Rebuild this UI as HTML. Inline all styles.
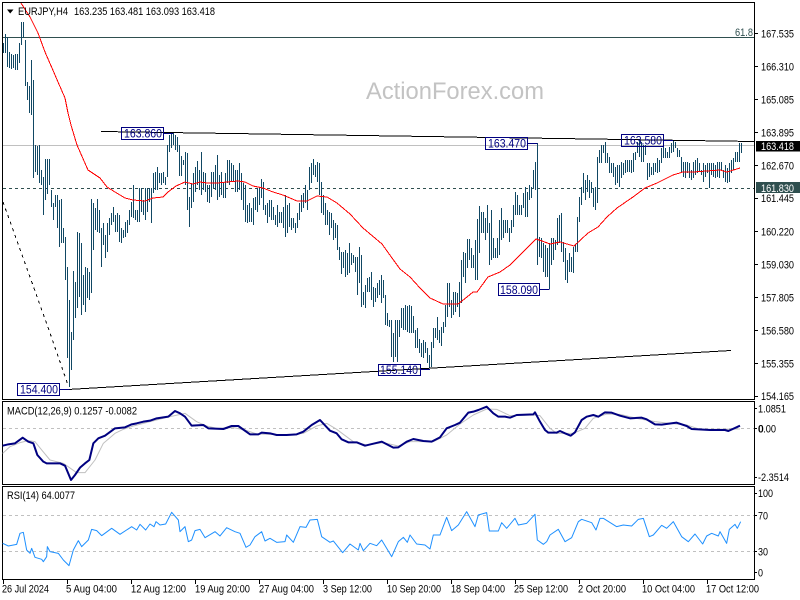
<!DOCTYPE html>
<html><head><meta charset="utf-8"><title>EURJPY,H4</title>
<style>
html,body{margin:0;padding:0;background:#fff;width:800px;height:600px;overflow:hidden}
svg{display:block;position:absolute;left:0;top:0}
text{font-family:"Liberation Sans",sans-serif;font-size:11px;fill:#000;white-space:pre}
.b text{fill:#000080;font-size:11.5px}
</style></head><body>
<svg width="800" height="600" viewBox="0 0 800 600" xmlns="http://www.w3.org/2000/svg">
<rect width="800" height="600" fill="#fff"/>
<text x="366" y="99" style="font-size:24px;fill:#c3c3c3" textLength="178" lengthAdjust="spacingAndGlyphs">ActionForex.com</text>
<g shape-rendering="crispEdges" fill="none">
<path d="M3 37.5H754" stroke="#2f4f4f"/>
<path d="M3 145.5H754" stroke="#c0c0c0"/>
<path d="M3 188.5H754" stroke="#2f4f4f" stroke-dasharray="3 3"/>
<path transform="translate(.5 0)" stroke="#114864" d="M3 43V53M5 34V53M7 37V67M9 52V68M11 54V69M13 55V68M15 54V70M17 54V70M19 43V63M21 22V45M23 22V38M25 40V86M27 82V100M29 86V113M31 60V115M33 80V178M35 145V172M37 146V175M39 145V183M41 170V185M43 177V215M45 159V200M47 159V194M49 159V185M51 190V207M53 203V220M55 195V207M57 195V228M59 200V247M61 199V243M63 228V243M65 237V280M67 267V358M69 300V387M71 332V370M73 271V340M75 282V318M77 232V308M79 233V297M81 243V315M83 275V305M85 267V312M87 268V298M89 272V300M91 199V293M93 203V250M95 208V230M97 199V232M99 210V233M101 228V267M103 223V245M105 235V258M107 223V252M109 218V235M111 213V225M113 207V222M115 215V232M117 213V232M119 215V242M121 228V243M123 230V238M125 222V237M127 220V233M129 210V225M131 202V217M133 185V218M135 210V220M137 210V222M139 188V222M141 188V212M143 200V215M145 188V220M147 188V212M149 188V202M151 188V223M153 173V193M155 172V190M157 167V190M159 173V183M161 173V185M163 172V183M165 177V185M167 145V177M169 135V152M171 133V148M173 133V145M175 135V150M177 137V152M179 145V176M181 156V176M183 160V165M185 152V185M187 153V210M189 197V227M191 183V208M193 173V202M195 167V192M197 161V185M199 170V190M201 152V195M203 172V190M205 173V192M207 185V202M209 185V203M211 172V197M213 172V188M215 165V190M217 155V200M219 175V197M221 172V195M223 182V198M225 173V198M227 160V183M229 160V185M231 163V182M233 165V182M235 170V192M237 170V192M239 163V190M241 173V200M243 183V210M245 185V222M247 205V223M249 203V222M251 208V222M253 198V225M255 197V210M257 188V212M259 188V205M261 179V198M263 182V210M265 205V215M267 203V223M269 200V217M271 200V220M273 207V220M275 215V225M277 205V227M279 212V223M281 212V223M283 207V228M285 195V237M287 205V233M289 203V227M291 218V230M293 218V228M295 223V233M297 213V228M299 203V220M301 195V212M303 193V208M305 185V203M307 190V210M309 167V190M311 163V183M313 159V175M315 165V177M317 162V182M319 163V195M321 182V213M323 195V215M325 203V225M327 210V225M329 212V235M331 213V228M333 220V240M335 223V238M337 225V250M339 247V260M341 252V274M343 252V268M345 250V277M347 253V275M349 243V273M351 253V265M353 255V263M355 257V272M357 257V295M359 247V283M361 255V307M363 292V305M365 285V308M367 278V292M369 277V292M371 272V300M373 287V307M375 288V302M377 283V298M379 280V295M381 275V303M383 280V298M385 295V325M387 313V326M389 320V327M391 320V357M393 333V362M395 320V357M397 320V362M399 320V337M401 308V328M403 308V330M405 305V330M407 306V332M409 305V333M411 306V333M413 316V333M415 330V348M417 328V348M419 339V353M421 343V357M423 340V358M425 342V353M427 348V363M429 355V368M431 342V367M433 328V348M435 328V338M437 317V340M439 330V343M441 327V346M443 322V333M445 305V327M447 283V317M449 283V307M451 300V318M453 292V315M455 292V312M457 293V307M459 282V317M461 260V303M463 252V277M465 253V283M467 239V268M469 239V260M471 248V268M473 255V268M475 240V280M477 219V280M479 206V253M481 212V233M483 212V233M485 218V240M487 205V233M489 223V265M491 210V260M493 238V258M495 248V258M497 238V258M499 220V255M501 208V240M503 220V238M505 220V233M507 220V233M509 228V242M511 220V233M513 205V227M515 192V215M517 195V215M519 205V215M521 205V215M523 193V208M525 187V217M527 192V217M529 185V200M531 187V198M533 170V188M535 162V190M537 143V265M539 237V257M541 238V258M543 243V272M545 245V277M547 248V277M549 243V289M551 238V265M553 238V260M555 240V250M557 218V245M559 215V243M561 213V252M563 242V262M565 248V280M567 260V283M569 253V272M571 257V272M573 247V273M575 245V252M577 217V252M579 197V222M581 187V205M583 173V193M585 180V200M587 175V192M589 180V198M591 182V193M593 188V207M595 187V210M597 157V203M599 150V163M601 145V163M603 145V153M605 142V163M607 153V163M609 157V173M611 163V173M613 163V177M615 167V185M617 165V183M619 165V187M621 162V178M623 163V175M625 160V173M627 160V172M629 160V172M631 160V173M633 153V172M635 152V160M637 142V153M639 140V157M641 142V162M643 145V162M645 145V155M647 163V180M649 163V177M651 167V175M653 163V175M655 163V172M657 158V173M659 160V172M661 148V163M663 145V158M665 148V158M667 152V158M669 147V158M671 143V153M673 140V152M675 142V148M677 148V157M679 150V157M681 157V172M683 162V177M685 162V178M687 162V173M689 163V178M691 170V180M693 162V178M695 160V175M697 158V173M699 163V172M701 170V175M703 163V182M705 165V177M707 163V173M709 163V188M711 163V175M713 163V177M715 165V178M717 162V177M719 162V178M721 162V170M723 170V178M725 165V182M727 168V183M729 163V182M731 160V173M733 158V170M735 152V162M737 152V162M739 143V162M741 143V153"/>
<polyline stroke="#f00" points="21,3 30,17 38,33 45,52 52,68 58,82 65,98 68,113 71,125 77,145 88,170 100,178 107,187 115,192 125,198 133,200 145,201 153,198 163,197 168,192 176,186 185,182 193,184 200,182 207,183 217,183 227,182 238,181 245,182 253,186 263,188 273,192 283,195 297,201 307,201 317,196 327,197 337,203 350,214 363,228 382,244 392,258 400,269 410,277 420,288 430,298 443,304 458,304 467,297 473,292 477,292 488,277 500,272 510,265 530,245 536,239 542,241 550,244 560,242 574,246 588,233 598,227 607,217 617,208 633,197 645,188 657,183 673,175 683,172 693,172 720,170 727,172 740,168"/>
<path stroke="#000" d="M101 131.5L754 141.5"/>
<path stroke="#000" d="M68 389.5L731 350.5"/>
<path stroke="#000" stroke-dasharray="3 4" d="M3 202L30 277L50 333L68 385"/>
<g stroke="#000080">
<path d="M164 133.5H173M527 143.5H537.5M663 140.5H673M60 389.5H69.5M420 369.5H430M539 289.5H549.5"/>
<rect x="121.5" y="127.5" width="42" height="12"/>
<rect x="485.5" y="137.5" width="42" height="12"/>
<rect x="621.5" y="134.5" width="42" height="12"/>
<rect x="17.5" y="383.5" width="42" height="12"/>
<rect x="378.5" y="364.5" width="42" height="11"/>
<rect x="498.5" y="283.5" width="41" height="12"/>
</g>
<!-- frames -->
<g stroke="#000">
<rect x="2.5" y="2.5" width="752" height="397"/>
<rect x="2.5" y="401.5" width="752" height="83"/>
<rect x="2.5" y="486.5" width="752" height="93"/>
<path d="M754 33.5h4M754 66.5h4M754 99.5h4M754 132.5h4M754 165.5h4M754 198.5h4M754 231.5h4M754 264.5h4M754 297.5h4M754 330.5h4M754 363.5h4M754 396.5h4M754 408.5h3M754 428.5h3M754 477.5h3M754 493.5h3M754 515.5h3M754 551.5h3M754 572.5h3"/>
<path d="M3.5 580v4M67.5 580v4M131.5 580v4M195.5 580v4M259.5 580v4M323.5 580v4M387.5 580v4M451.5 580v4M515.5 580v4M579.5 580v4M643.5 580v4M707.5 580v4"/>
</g>
<path stroke="#c0c0c0" stroke-dasharray="3 3" d="M3 428.5H754M3 515.5H754M3 551.5H754"/>
<rect x="756" y="141" width="44" height="10.5" fill="#000" stroke="none"/>
<rect x="756" y="182" width="44" height="11" fill="#2f4f4f" stroke="none"/>
</g>
<!-- indicators drawn in 3x coordinates -->
<g transform="translate(0 400) scale(.33333)" fill="none" stroke-linejoin="round">
<polyline stroke="#c0c0c0" stroke-width="3" points="8,160 30,140 60,128 85,122 105,125 125,150 150,180 190,190 230,218 255,218 285,180 310,130 345,100 370,88 400,78 450,65 500,52 555,40 590,65 620,78 650,85 700,83 735,90 770,102 810,103 860,105 910,100 950,78 980,70 1010,88 1060,125 1100,135 1150,128 1195,138 1230,125 1300,125 1340,105 1380,72 1420,45 1460,27 1490,28 1530,47 1600,45 1620,47 1650,85 1670,100 1720,100 1755,85 1780,55 1820,42 1860,43 1910,55 1965,65 2010,70 2060,75 2100,88 2220,87"/>
<polyline stroke="#000080" stroke-width="6" points="8,137 25,133 45,130 68,113 85,125 100,130 112,165 130,185 140,190 180,190 195,197 213,240 225,225 240,203 255,190 268,180 280,130 295,115 315,107 345,85 375,82 395,73 410,70 430,65 450,62 470,55 505,50 525,33 540,40 555,50 575,77 610,75 625,85 670,87 695,78 715,78 750,103 775,103 785,98 810,100 830,105 860,105 890,103 910,95 935,75 960,60 990,92 1010,100 1025,118 1045,127 1070,127 1095,137 1120,131 1145,125 1180,143 1195,142 1220,125 1240,117 1270,123 1295,125 1320,112 1340,85 1365,75 1380,68 1405,38 1420,35 1435,30 1460,20 1480,40 1495,50 1515,50 1530,53 1550,45 1600,43 1605,37 1620,65 1635,90 1645,98 1670,98 1680,93 1695,100 1712,107 1725,97 1745,60 1760,50 1780,45 1795,50 1815,37 1835,38 1860,47 1890,55 1925,53 1940,58 1965,73 1985,74 2030,68 2060,78 2075,87 2130,90 2175,90 2185,93 2220,77"/>
<polyline stroke="#1e90ff" stroke-width="3" points="8,430 25,438 50,433 60,400 70,397 80,450 90,460 95,445 105,472 125,478 130,485 140,470 142,440 150,455 175,460 190,480 207,497 220,450 235,422 245,440 265,420 275,388 290,392 305,407 335,385 360,403 395,380 410,390 420,373 437,390 450,372 462,380 468,365 480,375 497,372 515,337 535,360 540,395 555,380 565,425 575,420 585,392 600,388 615,413 645,395 660,408 680,383 705,395 720,400 738,442 750,435 765,410 785,395 795,423 810,415 830,427 855,425 860,405 880,427 900,380 918,382 930,360 952,358 965,410 990,427 1000,423 1028,458 1050,432 1075,450 1080,430 1090,452 1110,430 1130,437 1145,420 1175,470 1195,425 1210,412 1222,427 1230,405 1250,432 1275,435 1290,447 1300,405 1320,405 1340,352 1355,392 1375,375 1400,335 1425,380 1435,345 1460,338 1468,393 1495,393 1505,368 1520,385 1545,355 1555,375 1580,370 1605,343 1612,420 1630,433 1640,425 1650,405 1675,388 1695,425 1715,413 1735,365 1745,358 1775,368 1788,390 1800,355 1810,355 1850,380 1870,375 1895,378 1915,358 1930,355 1948,410 1960,405 1985,376 2000,385 2020,365 2045,410 2065,425 2085,402 2108,432 2120,408 2135,400 2155,408 2160,395 2180,430 2188,388 2205,373 2212,385 2222,365"/>
</g>
<!-- title -->
<path d="M7 9.5H13.5L10.2 13.5Z" fill="#000"/>
<text x="18" y="15" textLength="50" lengthAdjust="spacingAndGlyphs">EURJPY,H4</text>
<text x="74" y="15" textLength="141" lengthAdjust="spacingAndGlyphs">163.235 163.481 163.093 163.418</text>
<text x="735" y="36" style="fill:#2f4f4f" textLength="18" lengthAdjust="spacingAndGlyphs">61.8</text>
<!-- labels -->
<g class="b">
<text x="124" y="137.5" textLength="38" lengthAdjust="spacingAndGlyphs">163.860</text>
<text x="488" y="147.5" textLength="38" lengthAdjust="spacingAndGlyphs">163.470</text>
<text x="624" y="144.5" textLength="38" lengthAdjust="spacingAndGlyphs">163.580</text>
<text x="20" y="393.5" textLength="38" lengthAdjust="spacingAndGlyphs">154.400</text>
<text x="380" y="374" textLength="38" lengthAdjust="spacingAndGlyphs">155.140</text>
<text x="500" y="294" textLength="38" lengthAdjust="spacingAndGlyphs">158.090</text>
</g>
<!-- price axis -->
<g>
<text x="761" y="37.5" textLength="33" lengthAdjust="spacingAndGlyphs">167.535</text>
<text x="761" y="70.5" textLength="33" lengthAdjust="spacingAndGlyphs">166.310</text>
<text x="761" y="103.5" textLength="33" lengthAdjust="spacingAndGlyphs">165.085</text>
<text x="761" y="136.5" textLength="33" lengthAdjust="spacingAndGlyphs">163.895</text>
<text x="761" y="150" style="fill:#fff" textLength="33" lengthAdjust="spacingAndGlyphs">163.418</text>
<text x="761" y="169.5" textLength="33" lengthAdjust="spacingAndGlyphs">162.670</text>
<text x="761" y="192" style="fill:#fff" textLength="33" lengthAdjust="spacingAndGlyphs">161.830</text>
<text x="761" y="202" textLength="33" lengthAdjust="spacingAndGlyphs">161.445</text>
<text x="761" y="235.5" textLength="33" lengthAdjust="spacingAndGlyphs">160.220</text>
<text x="761" y="268.5" textLength="33" lengthAdjust="spacingAndGlyphs">159.030</text>
<text x="761" y="301.5" textLength="33" lengthAdjust="spacingAndGlyphs">157.805</text>
<text x="761" y="334.5" textLength="33" lengthAdjust="spacingAndGlyphs">156.580</text>
<text x="761" y="367.5" textLength="33" lengthAdjust="spacingAndGlyphs">155.355</text>
<text x="761" y="400" textLength="33" lengthAdjust="spacingAndGlyphs">154.165</text>
</g>
<!-- indicator labels -->
<text x="7" y="414.5" textLength="130" lengthAdjust="spacingAndGlyphs">MACD(12,26,9) 0.1257 -0.0082</text>
<text x="758" y="412.5" textLength="28" lengthAdjust="spacingAndGlyphs">1.0851</text>
<text x="758" y="432.5" textLength="18" lengthAdjust="spacingAndGlyphs">0.00</text>
<text x="758.6" y="432.5" textLength="5" lengthAdjust="spacingAndGlyphs">0</text>
<text x="758" y="481" textLength="31" lengthAdjust="spacingAndGlyphs">-2.3514</text>
<text x="7" y="499" textLength="68" lengthAdjust="spacingAndGlyphs">RSI(14) 64.0077</text>
<text x="758" y="497" textLength="15" lengthAdjust="spacingAndGlyphs">100</text>
<text x="758" y="519.5" textLength="10" lengthAdjust="spacingAndGlyphs">70</text>
<text x="758" y="555.5" textLength="10" lengthAdjust="spacingAndGlyphs">30</text>
<text x="758" y="576.5" textLength="5" lengthAdjust="spacingAndGlyphs">0</text>
<!-- time axis -->
<g>
<text x="2" y="592.5" textLength="47" lengthAdjust="spacingAndGlyphs">26 Jul 2024</text>
<text x="66" y="592.5" textLength="51" lengthAdjust="spacingAndGlyphs">5 Aug 04:00</text>
<text x="131" y="592.5" textLength="55" lengthAdjust="spacingAndGlyphs">12 Aug 12:00</text>
<text x="195" y="592.5" textLength="55" lengthAdjust="spacingAndGlyphs">19 Aug 20:00</text>
<text x="259" y="592.5" textLength="55" lengthAdjust="spacingAndGlyphs">27 Aug 04:00</text>
<text x="323" y="592.5" textLength="49" lengthAdjust="spacingAndGlyphs">3 Sep 12:00</text>
<text x="387" y="592.5" textLength="54" lengthAdjust="spacingAndGlyphs">10 Sep 20:00</text>
<text x="451" y="592.5" textLength="54" lengthAdjust="spacingAndGlyphs">18 Sep 04:00</text>
<text x="514" y="592.5" textLength="54" lengthAdjust="spacingAndGlyphs">25 Sep 12:00</text>
<text x="578" y="592.5" textLength="48" lengthAdjust="spacingAndGlyphs">2 Oct 20:00</text>
<text x="642" y="592.5" textLength="53" lengthAdjust="spacingAndGlyphs">10 Oct 04:00</text>
<text x="706" y="592.5" textLength="53" lengthAdjust="spacingAndGlyphs">17 Oct 12:00</text>
</g>
</svg>
</body></html>
